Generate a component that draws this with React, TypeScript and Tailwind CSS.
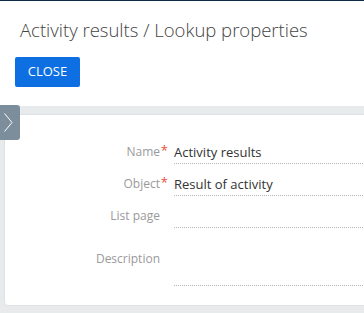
const font = { fontFamily: '"Open Sans", "Liberation Sans", sans-serif' };

type Row = { label: string; value?: string; required?: boolean; tall?: boolean };

const rows: Row[] = [
  { label: "Name", value: "Activity results", required: true },
  { label: "Object", value: "Result of activity", required: true },
  { label: "List page" },
  { label: "Description", tall: true },
];

export default function App() {
  return (
    <div className="relative h-[313px] w-[364px] overflow-hidden bg-[#e8ebec]" style={font}>
      {/* header */}
      <div className="border-t border-[#0e2a47] bg-white pl-[20px] pt-[17px] pb-[19px]">
        <h1 className="text-[18.5px] leading-[24px] font-light text-[#444]">
          Activity results / Lookup properties
        </h1>
        <button className="mt-[15px] -ml-[5px] h-[30px] w-[65px] rounded-[2px] bg-[#0e6fe2] text-[13px] font-medium text-white">
          CLOSE
        </button>
      </div>

      {/* side tab */}
      <div className="absolute left-0 top-[105px] h-[35px] w-[20px] rounded-r-[3px] bg-[#7c8d9b]">
        <svg width="20" height="35" viewBox="0 0 20 35" fill="none" stroke="#fff" strokeWidth="1">
          <polyline points="4.5,8.5 12,17.5 4.5,26.5" />
        </svg>
      </div>

      {/* card */}
      <div className="mt-[8px] ml-[4px] w-[380px] rounded-[4px] border border-[#dfe2e4] bg-white pt-[25px] pb-[19px]">
        {rows.map((r) => (
          <div key={r.label} className="mb-[8px] flex last:mb-0">
            <div
              className={`relative w-[155px] text-right text-[12px] leading-[18px] text-[#9a9a9a] ${
                r.tall ? "pt-[14px]" : "pt-[3px]"
              }`}
            >
              {r.label}
              {r.required && (
                <span className="absolute -right-[8px] top-[1px] text-[13px] text-[#e8503a]">*</span>
              )}
            </div>
            <div
              className={`ml-[14px] flex-1 border-b border-dotted border-[#b5b5b5] text-[13px] leading-[18px] text-[#333] ${
                r.tall ? "h-[50px]" : "h-[24px] pt-[3px]"
              }`}
            >
              {r.value}
            </div>
          </div>
        ))}
      </div>
    </div>
  );
}
